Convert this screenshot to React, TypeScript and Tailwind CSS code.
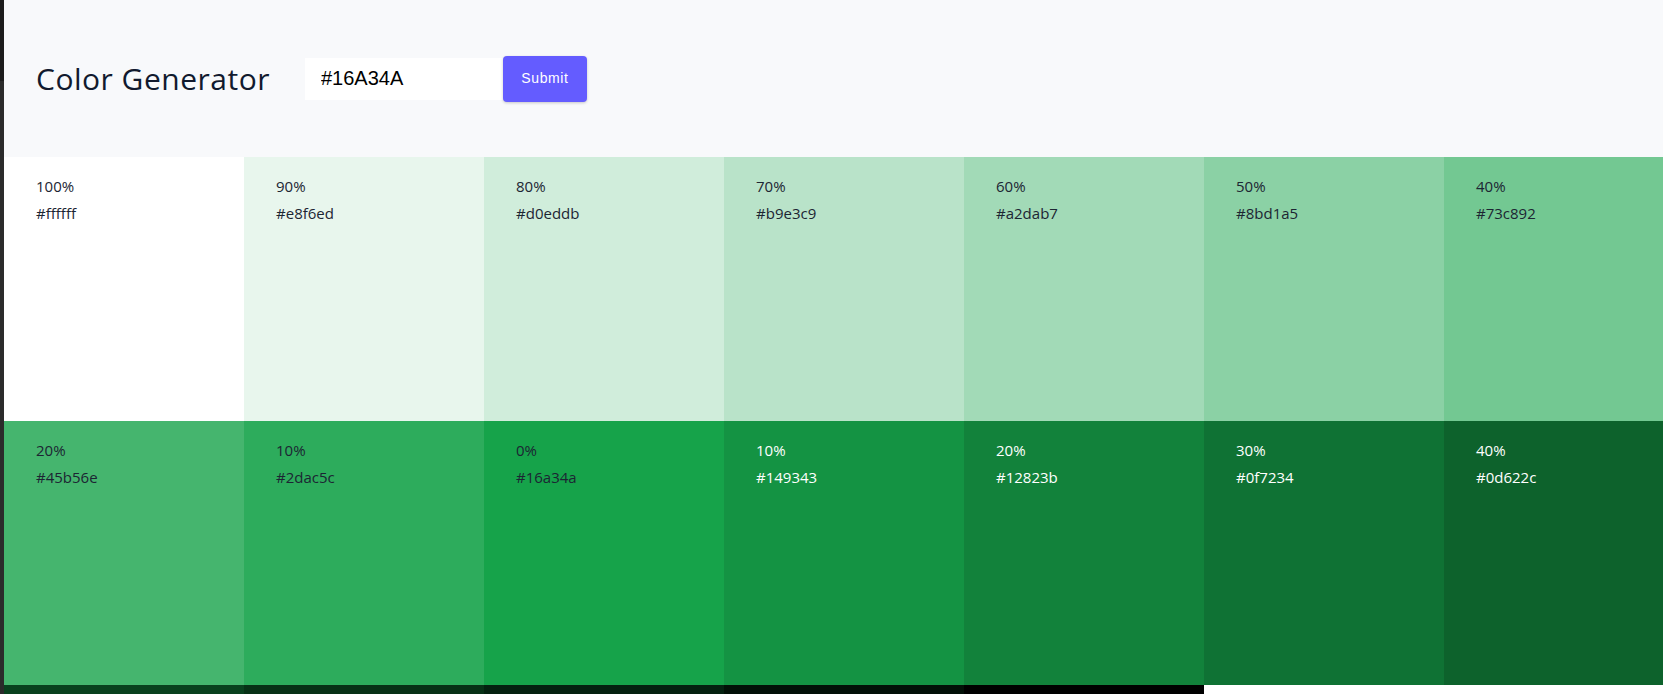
import { useState } from 'react';

type Swatch = { weight: number; hex: string; light: boolean };

const hexes = [
  'ffffff', 'e8f6ed', 'd0eddb', 'b9e3c9', 'a2dab7', '8bd1a5', '73c892', '5cbf80',
  '45b56e', '2dac5c', '16a34a', '149343', '12823b', '0f7234', '0d622c', '0b5225',
  '09411e', '073116', '042110', '021007', '000000',
];

const weights = [100, 90, 80, 70, 60, 50, 40, 30, 20, 10, 0, 10, 20, 30, 40, 50, 60, 70, 80, 90, 100];

const swatches: Swatch[] = hexes.map((hex, i) => ({
  weight: weights[i],
  hex,
  light: i > 10,
}));

function SingleColor({ weight, hex, light }: Swatch) {
  return (
    <article
      className="px-8 pt-4 text-[15px] leading-[27px]"
      style={{ backgroundColor: `#${hex}` }}
    >
      <p className={light ? 'text-white' : 'text-[#1c2533]'}>{weight}%</p>
      <p className={light ? 'text-white' : 'text-[#1c2533]'}>#{hex}</p>
    </article>
  );
}

export default function App() {
  const [color, setColor] = useState('#16A34A');

  return (
    <div className="flex h-screen w-full overflow-hidden bg-white font-['Open_Sans',sans-serif]">
      {/* window edge */}
      <div className="flex w-[4px] shrink-0 flex-col">
        <div className="h-[81px] bg-[#1c1c1c]" />
        <div className="flex-1 bg-[#2b2b2b]" />
      </div>

      <main className="w-[1920px] shrink-0">
        <section className="flex h-[157px] items-center bg-[#f8f9fb] pl-8">
          <h3 className="mr-[35px] text-[30px] leading-none tracking-[0.5px] text-[#111a2e]">
            Color Generator
          </h3>
          <form className="flex items-center" onSubmit={(e) => e.preventDefault()}>
            <input
              type="text"
              value={color}
              onChange={(e) => setColor(e.target.value)}
              className="h-[42px] w-[198px] border-0 bg-white px-4 font-['Liberation_Sans',Arial,sans-serif] text-[20px] text-black outline-none"
            />
            <button
              type="submit"
              className="h-[46px] w-[84px] rounded-[4px] bg-[#645cff] font-['Liberation_Sans',Arial,sans-serif] text-[14px] font-medium tracking-[0.6px] text-white shadow-[0_1px_3px_rgba(0,0,0,0.2)]"
            >
              Submit
            </button>
          </form>
        </section>

        <section className="grid grid-cols-8 auto-rows-[264px]">
          {swatches.map((s, i) => (
            <SingleColor key={i} {...s} />
          ))}
        </section>
      </main>
    </div>
  );
}
